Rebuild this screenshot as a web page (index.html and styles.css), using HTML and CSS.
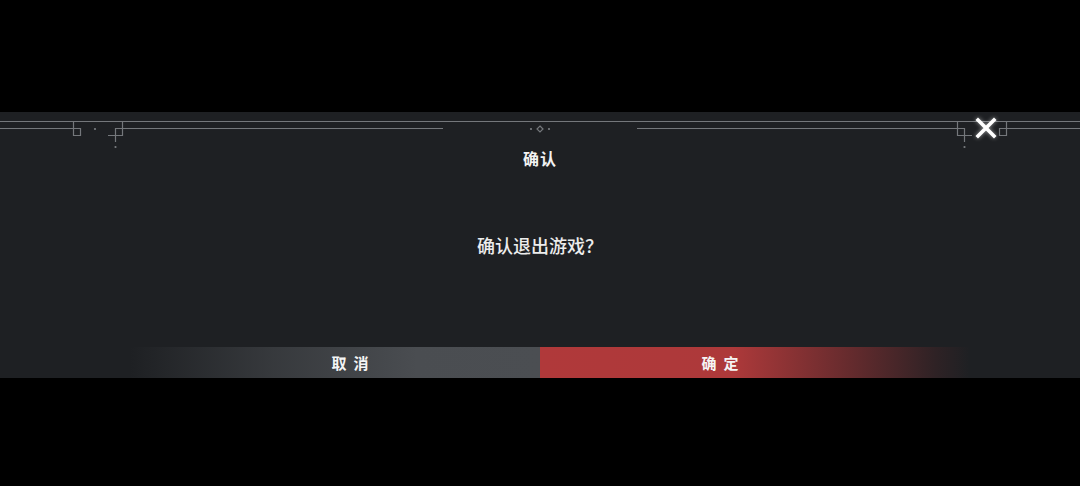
FILE: index.html
```html
<!DOCTYPE html>
<html lang="zh-CN">
<head>
<meta charset="utf-8">
<title>确认</title>
<link rel="stylesheet" href="styles.css">
</head>
<body>
<div class="screen">
  <section class="dialog">
    <svg class="ornament" width="1080" height="36" viewBox="0 0 1080 36" aria-hidden="true">
      <g class="rule" fill="none" stroke="#74777b" stroke-width="1.2">
        <path d="M0 9.5H1080"/>
        <path d="M122 16.5H443 M637 16.5H958"/>
        <g>
          <path d="M0 16.5H80.5V23.5H73.5V9"/>
          <path d="M108 23.5H122.5V9"/>
          <path d="M115.5 30V16.5H122"/>
        </g>
        <g transform="translate(1080 0) scale(-1 1)">
          <path d="M0 16.5H80.5V23.5H73.5V9"/>
          <path d="M108 23.5H122.5V9"/>
          <path d="M115.5 30V16.5H122"/>
        </g>
        <path d="M540 14L543 17L540 20L537 17Z"/>
      </g>
      <g fill="#7a7d81">
        <circle cx="95" cy="17" r="1.1"/>
        <circle cx="115.5" cy="35" r="1.1"/>
        <circle cx="964.5" cy="35" r="1.1"/>
        <circle cx="531" cy="17" r="1.1"/>
        <circle cx="549" cy="17" r="1.1"/>
      </g>
    </svg>

    <button class="close" type="button" aria-label="关闭">
      <svg width="22" height="22" viewBox="0 0 22 22">
        <path d="M3 3L19 19M19 3L3 19" stroke="#ffffff" stroke-width="3.6" stroke-linecap="square"/>
      </svg>
    </button>

    <h1 class="title">确认</h1>
    <p class="message">确认退出游戏？</p>

    <div class="actions">
      <button class="btn btn-cancel" type="button"><span>取消</span></button>
      <button class="btn btn-ok" type="button"><span>确定</span></button>
    </div>
  </section>
</div>
</body>
</html>
```

FILE: styles.css
```css
html, body {
  margin: 0;
  padding: 0;
  background: #000;
}

body {
  width: 1080px;
  height: 486px;
  overflow: hidden;
  font-family: "Noto Sans CJK SC", "Noto Sans", sans-serif;
}

.screen {
  padding-top: 112px;
}

.dialog {
  position: relative;
  height: 266px;
  background: #1e2023;
  display: flex;
  flex-direction: column;
  align-items: center;
}

.ornament {
  display: block;
  flex: none;
  width: 1080px;
  height: 36px;
  overflow: visible;
}

.close {
  position: absolute;
  top: 5px;
  right: 83px;
  width: 22px;
  height: 22px;
  padding: 0;
  border: 0;
  background: none;
  filter: drop-shadow(0 0 2px rgba(255, 255, 255, 0.55));
}

.close svg {
  display: block;
}

.title {
  margin: 0;
  font-size: 16px;
  line-height: 20px;
  font-weight: 700;
  color: #f2f2f2;
  letter-spacing: 1px;
}

.message {
  margin: 65px 0 0;
  font-size: 18px;
  line-height: 24px;
  font-weight: 500;
  color: #ececec;
}

.actions {
  margin-top: auto;
  align-self: stretch;
  display: flex;
  padding-left: 130px;
}

.btn {
  height: 31px;
  padding: 0;
  border: 0;
  font-family: inherit;
  font-size: 15px;
  font-weight: 700;
  color: #f4f4f4;
  display: flex;
  align-items: center;
  justify-content: center;
}

.btn span {
  letter-spacing: 7px;
  margin-right: -7px;
}

.btn-cancel {
  width: 410px;
  padding-left: 30px;
  background: linear-gradient(90deg, rgba(75, 78, 82, 0) 0%, rgba(75, 78, 82, 0.55) 35%, #4a4d51 70%, #4b4e52 100%);
}

.btn-ok {
  width: 430px;
  padding-right: 70px;
  background: linear-gradient(90deg, #b0393a 0%, #ad393a 45%, rgba(160, 52, 54, 0.55) 72%, rgba(140, 45, 48, 0.15) 92%, rgba(140, 45, 48, 0) 100%);
}
```
